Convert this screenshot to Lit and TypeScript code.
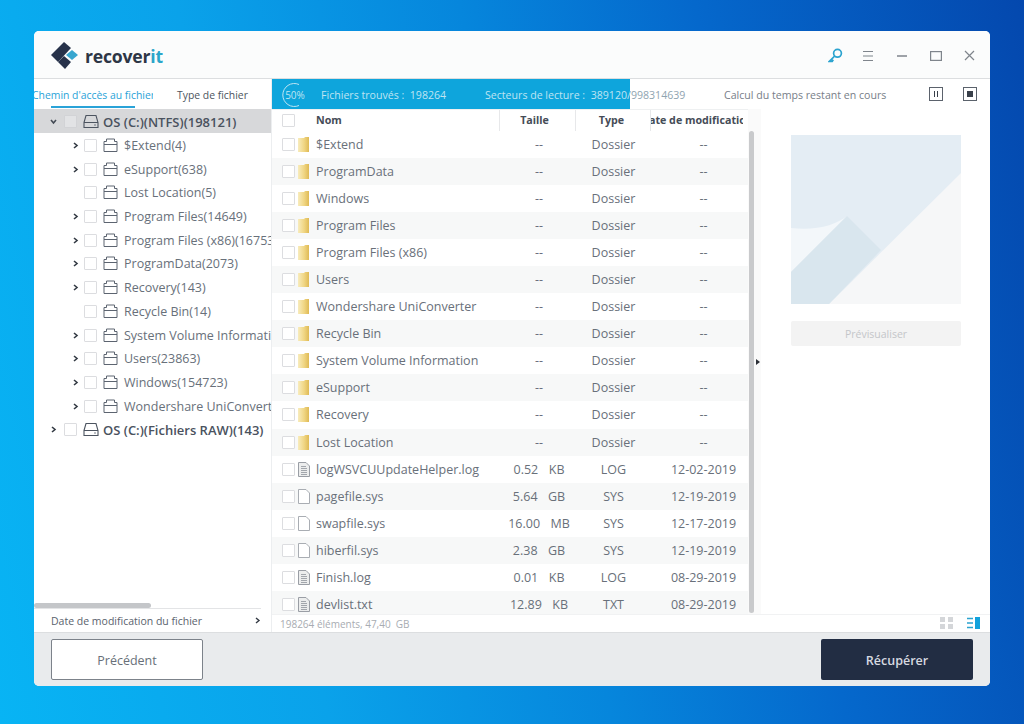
import { LitElement, html, css, svg } from "lit";
import { customElement } from "lit/decorators.js";

const tree = [
  ["$Extend(4)", 1], ["eSupport(638)", 1], ["Lost Location(5)", 0], ["Program Files(14649)", 1],
  ["Program Files (x86)(16753)", 1], ["ProgramData(2073)", 1], ["Recovery(143)", 1], ["Recycle Bin(14)", 0],
  ["System Volume Information(38)", 1], ["Users(23863)", 1], ["Windows(154723)", 1], ["Wondershare UniConverter(12)", 1],
] as [string, number][];

const rows = [
  ["d", "$Extend", "--", "Dossier", "--"], ["d", "ProgramData", "--", "Dossier", "--"], ["d", "Windows", "--", "Dossier", "--"],
  ["d", "Program Files", "--", "Dossier", "--"], ["d", "Program Files (x86)", "--", "Dossier", "--"], ["d", "Users", "--", "Dossier", "--"],
  ["d", "Wondershare UniConverter", "--", "Dossier", "--"], ["d", "Recycle Bin", "--", "Dossier", "--"],
  ["d", "System Volume Information", "--", "Dossier", "--"], ["d", "eSupport", "--", "Dossier", "--"],
  ["d", "Recovery", "--", "Dossier", "--"], ["d", "Lost Location", "--", "Dossier", "--"],
  ["t", "logWSVCUUpdateHelper.log", "0.52  KB", "LOG", "12-02-2019"], ["f", "pagefile.sys", "5.64  GB", "SYS", "12-19-2019"],
  ["f", "swapfile.sys", "16.00  MB", "SYS", "12-17-2019"], ["f", "hiberfil.sys", "2.38  GB", "SYS", "12-19-2019"],
  ["t", "Finish.log", "0.01  KB", "LOG", "08-29-2019"], ["t", "devlist.txt", "12.89  KB", "TXT", "08-29-2019"],
];

const folderIco = svg`<svg width="15" height="15" viewBox="0 0 15 15" fill="none" stroke="#5c6470" stroke-width="1"><path d="M1 13.5V3.5H3.5V1H11.5V3.5H14V13.5ZM1 6.5H14"/></svg>`;
const driveIco = svg`<svg width="16" height="15" viewBox="0 0 16 15" fill="none" stroke="#4c5460" stroke-width="1.1"><path d="M1 8.5L3 1.5H13L15 8.5V13.5H1ZM1 8.5H15"/><path d="M11.5 11H12.5" stroke-width="1.4"/></svg>`;
const yFolder = svg`<svg class="yf" width="11" height="15" viewBox="0 0 11 15"><defs><linearGradient id="yg" x1="0" x2="1" y1="0" y2="0"><stop offset="0" stop-color="#f8ecbd"/><stop offset=".55" stop-color="#f0d684"/><stop offset="1" stop-color="#dfba55"/></linearGradient></defs><path d="M0 1H6L7 0H11V15H0Z" fill="url(#yg)"/></svg>`;
const fileIco = svg`<svg width="12" height="15" viewBox="0 0 12 15" fill="#fff" stroke="#a9adb3"><path d="M.5 .5H8L11.5 4V14.5H.5Z"/></svg>`;
const textIco = svg`<svg width="12" height="15" viewBox="0 0 12 15" fill="#eceded" stroke="#9a9ea5"><path d="M.5 .5H8L11.5 4V14.5H.5Z"/><path d="M3 4.5H8M3 6.5H9M3 8.5H9M3 10.5H9M3 12.5H9" stroke-width=".9"/></svg>`;

@customElement("app-root")
export class AppRoot extends LitElement {
  static styles = css`
    :host { display: block; width: 1024px; height: 724px; overflow: hidden; box-sizing: border-box; padding: 31px 34px 0; font-family: "Open Sans", "Noto Sans", sans-serif; color: #5f6670;
      background: linear-gradient(78deg, #08b4f4 0%, #0aa2ea 28%, #0686dc 52%, #0568cc 72%, #0448ae 100%); }
    .win { width: 956px; height: 655px; background: #fff; border-radius: 5px; display: flex; flex-direction: column; overflow: hidden; }
    .title { height: 48px; flex: none; display: flex; align-items: center; background: #fbfcfc; border-bottom: 1px solid #dcdee0; padding: 2px 15px 0 17px; box-sizing: border-box; }
    .logo { display: flex; align-items: center; gap: 6px; font: 700 17.6px "Open Sans", sans-serif; color: #2d3646; letter-spacing: -.2px; }
    .logo b { color: #2ba5c9; font-weight: 700; }
    .tools { margin-left: auto; display: flex; align-items: center; gap: 22px; }
    .tools svg { display: block; }
    .tools .key { margin-right: -3px; }
    .body { flex: 1; display: flex; min-height: 0; }
    .side { width: 237px; flex: none; display: flex; flex-direction: column; border-right: 1px solid #eceef0; }
    .tabs { height: 30px; flex: none; display: flex; font-size: 10.4px; align-items: center; position: relative; color: #4d5560; overflow: hidden; padding-top: 2px; box-sizing: border-box; }
    .tabs .a { color: #2aa3d8; width: 119px; flex: none; white-space: nowrap; display: flex; justify-content: center; overflow: hidden; }
    .tabs .a span { flex: none; }
    .tabs .b { margin-left: 24px; white-space: nowrap; }
    .tabs i { position: absolute; left: 17px; bottom: 1px; width: 84px; height: 2px; background: #2aa3d8; }
    .tree { flex: 1; min-height: 0; overflow: hidden; }
    .node { height: 23.7px; display: flex; align-items: center; font-size: 12.5px; white-space: nowrap; overflow: hidden; color: #68707a; padding-top: 2px; box-sizing: border-box; }
    .node.on { background: #d7d8da; }
    .node.on .cb { background: #e2e3e5; border-color: #d2d3d6; }
    .node.root { font-size: 13px; font-weight: 600; color: #4a525e; padding-left: 16px; }
    .node.child { padding-left: 38px; }
    .arrow { width: 7px; flex: none; margin-right: 7px; display: block; }
    .node.child .arrow { margin-right: 5px; }
    .cb { width: 11px; height: 11px; flex: none; border: 1px solid #dcdde0; background: #fff; border-radius: 1px; box-sizing: content-box; }
    .node .cb { margin-right: 6px; }
    .node.root svg:not(.arrow) { margin-right: 4px; flex: none; }
    .node.child svg:not(.arrow) { margin-right: 6px; flex: none; }
    .sbar { height: 6px; flex: none; position: relative; border-bottom: 1px solid #e3e4e6; margin-right: 10px; box-sizing: content-box; }
    .sbar i { position: absolute; left: 0; top: 1px; width: 117px; height: 5px; background: #c4c6c9; border-radius: 3px; }
    .date { height: 23px; flex: none; display: flex; align-items: center; justify-content: space-between; font-size: 10.5px; padding: 0 10px 0 17px; color: #5a626d; box-sizing: border-box; }
    .main { flex: 1; min-width: 0; display: flex; flex-direction: column; }
    .prog { height: 30px; flex: none; display: flex; align-items: center; font-size: 10.6px; position: relative; background: #fff; color: #7b828c; white-space: pre; }
    .fill { position: absolute; left: 0; top: 0; bottom: 0; width: 358px; background: #0ea5dc; overflow: hidden; }
    .ptext { display: flex; align-items: center; width: 719px; height: 100%; flex: none; color: #8fa4b0; white-space: pre; padding-top: 2px; box-sizing: border-box; }
    .fill .ptext { color: #bfe4f2; }
    .ring { margin: 0 0 0 10px; width: 26px; height: 26px; position: relative; display: flex; align-items: center; justify-content: center; font-size: 10px; flex: none; }
    .ring svg { position: absolute; inset: 0; }
    .found { margin-left: 13px; width: 164px; flex: none; }
    .calc { position: absolute; left: 452px; top: 2px; bottom: 0; display: flex; align-items: center; color: #777e88; }
    .pbtn { position: absolute; top: 8px; width: 12px; height: 12px; border: 1px solid #5b626c; display: flex; align-items: center; justify-content: center; gap: 1.5px; }
    .pbtn.p1 { left: 657px; }
    .pbtn.p2 { left: 691px; }
    .pbtn u { display: block; width: 1.5px; height: 6px; background: #39404a; }
    .pbtn s { display: block; width: 6px; height: 6px; background: #39404a; }
    .content { flex: 1; min-height: 0; display: flex; }
    .tbl { width: 476px; flex: none; display: flex; flex-direction: column; overflow: hidden; }
    .head, .row { display: grid; grid-template-columns: 228px 76px 75px 97px; align-items: center; }
    .head { height: 22px; flex: none; font-size: 10.7px; font-weight: 700; color: #454c57; border-top: 1px solid #eef0f1; box-sizing: border-box; }
    .hc { height: 100%; display: flex; align-items: center; justify-content: center; border-right: 1px solid #e7e8ea; white-space: nowrap; overflow: hidden; box-sizing: border-box; padding-bottom: 1px; }
    .hc:first-child { justify-content: flex-start; padding-left: 10px; gap: 21px; }
    .hc.t1 { padding-right: 6px; }
    .hc.t2 { padding-right: 3px; }
    .hc:last-child { border: 0; margin-right: 5px; padding: 0 0 1px; }
    .hc span { flex: none; }
    .list { flex: 1; min-height: 0; overflow: hidden; }
    .row { height: 27.06px; font-size: 12.5px; color: #69707a; text-align: center; white-space: pre; }
    .row:nth-child(even) { background: #f7f8f8; }
    .nm { display: flex; align-items: center; text-align: left; padding-left: 10px; }
    .nm .cb { margin-right: 3px; }
    .nm svg { margin-right: 6px; flex: none; }
    .nm svg.yf { margin-right: 7px; }
    .sz { word-spacing: 2px; padding-left: 2px; }
    .dt { padding-left: 8px; }
    .vs { width: 13px; flex: none; background: #fafafa; display: flex; justify-content: flex-start; padding-left: 1px; box-sizing: border-box; }
    .vs i { display: block; width: 5px; height: 482px; margin-top: 22px; background: #c9cacc; border-radius: 3px; }
    .pre { flex: 1; position: relative; padding: 26px 0 0 30px; }
    .thumb { display: block; }
    .pv { margin-top: 17px; width: 170px; height: 25px; background: #f3f3f3; border-radius: 2px; display: flex; align-items: center; justify-content: center; color: #c4c6c9; font-size: 10.5px; }
    .tri { position: absolute; left: -5px; top: 250px; width: 0; height: 0; border-left: 4px solid #2b2f36; border-top: 3.5px solid transparent; border-bottom: 3.5px solid transparent; }
    .stat { height: 17px; flex: none; display: flex; align-items: center; font-size: 10px; color: #a8acb2; padding: 0 10px 0 8px; border-top: 1px solid #f1f2f3; white-space: pre; }
    .stat .v { margin-left: auto; display: flex; gap: 14px; align-items: center; }
    .foot { height: 54px; flex: none; background: #e9ebed; border-top: 1px solid #dcdee0; box-sizing: border-box; display: flex; align-items: center; justify-content: space-between; padding: 0 17px; }
    .btn { width: 152px; height: 41px; border-radius: 2px; display: flex; align-items: center; justify-content: center; font-size: 12.5px; box-sizing: border-box; padding-top: 2px; }
    .prev { background: #fff; border: 1px solid #7c828a; color: #686f79; }
    .rec { background: #222d43; color: #d7dae0; font-weight: 600; }
  `;

  arrow(open = false) {
    return open
      ? svg`<svg class="arrow" width="7" height="7" viewBox="0 0 7 7"><path d="M1 2L3.5 5L6 2" fill="none" stroke="#444b55" stroke-width="1.6"/></svg>`
      : svg`<svg class="arrow" width="7" height="7" viewBox="0 0 7 7"><path d="M2 1L5 3.5L2 6" fill="none" stroke="#333a44" stroke-width="1.6"/></svg>`;
  }

  render() {
    return html`<div class="win">
      <div class="title">
        <div class="logo">
          <svg width="28" height="27" viewBox="0 0 28 27">
            <path d="M0 13L13 0L20 6L7 20Z" fill="#27324a"/>
            <path d="M7 20L13 14L20 20L14 27Z" fill="#27324a"/>
            <path d="M15 13L21 8L27 13L21 18Z" fill="#37a6cf"/>
          </svg>
          <span>recover<b>it</b></span>
        </div>
        <div class="tools">
          <svg class="key" width="15" height="15" viewBox="0 0 15 15" fill="none" stroke="#2ba3cf" stroke-width="1.7"><circle cx="9.5" cy="5.3" r="3.9"/><path d="M6.7 8L1.5 13.3H4.2L5.3 11.8"/></svg>
          <svg width="12" height="12" viewBox="0 0 12 12" stroke="#7f858c" stroke-width="1.1"><path d="M1 1.5H11M1 6H11M1 10.5H11"/></svg>
          <svg width="12" height="12" viewBox="0 0 12 12" stroke="#7f858c" stroke-width="1.3"><path d="M1 6H11"/></svg>
          <svg width="12" height="12" viewBox="0 0 12 12" fill="none" stroke="#7f858c" stroke-width="1.2"><rect x=".6" y="1.6" width="10.8" height="8.8"/></svg>
          <svg width="11" height="11" viewBox="0 0 11 11" stroke="#7f858c" stroke-width="1.2"><path d="M1 1L10 10M10 1L1 10"/></svg>
        </div>
      </div>
      <div class="body">
        <div class="side">
          <div class="tabs"><span class="a"><span>Chemin d'accès au fichier</span></span><span class="b">Type de fichier</span><i></i></div>
          <div class="tree">
            <div class="node root on">${this.arrow(true)}<span class="cb"></span>${driveIco}OS (C:)(NTFS)(198121)</div>
            ${tree.map(([n, a]) => html`<div class="node child">${a ? this.arrow() : html`<span class="arrow"></span>`}<span class="cb"></span>${folderIco}${n}</div>`)}
            <div class="node root">${this.arrow()}<span class="cb"></span>${driveIco}OS (C:)(Fichiers RAW)(143)</div>
          </div>
          <div class="sbar"><i></i></div>
          <div class="date">Date de modification du fichier ${svg`<svg width="7" height="7" viewBox="0 0 7 7"><path d="M2 1L5 3.5L2 6" fill="none" stroke="#333a44" stroke-width="1.4"/></svg>`}</div>
        </div>
        <div class="main">
          <div class="prog">
            <div class="ptext">${this.progText()}</div>
            <div class="fill"><div class="ptext">${this.progText()}</div></div>
            <span class="calc">Calcul du temps restant en cours</span>
            <span class="pbtn p1"><u></u><u></u></span>
            <span class="pbtn p2"><s></s></span>
          </div>
          <div class="content">
            <div class="tbl">
              <div class="head">
                <div class="hc"><span class="cb"></span><span>Nom</span></div>
                <div class="hc t1">Taille</div><div class="hc t2">Type</div>
                <div class="hc"><span>Date de modification</span></div>
              </div>
              <div class="list">
                ${rows.map(([k, n, s, t, d]) => html`<div class="row"><div class="nm"><span class="cb"></span>${k === "d" ? yFolder : k === "f" ? fileIco : textIco}${n}</div><div class="sz">${s}</div><div>${t}</div><div class="dt">${d}</div></div>`)}
              </div>
            </div>
            <div class="vs"><i></i></div>
            <div class="pre">
              <span class="tri"></span>
              <svg class="thumb" width="170" height="169" viewBox="0 0 170 169">
                <rect width="170" height="169" fill="#e4edf4"/>
                <path d="M170 38V169H38Z" fill="#f6f7f8"/>
                <path d="M0 93C25 96 45 90 56 81L0 137Z" fill="#f3f7fa"/>
                <path d="M0 137L56 81L90 115L38 169H0Z" fill="#d9e6ee"/>
              </svg>
              <div class="pv">Prévisualiser</div>
            </div>
          </div>
          <div class="stat"><span>198264 éléments, 47,40  GB</span><span class="v"><svg width="13" height="13" viewBox="0 0 13 13" fill="#d4d6d9"><rect width="5" height="5"/><rect x="8" width="5" height="5"/><rect y="7" width="5" height="5"/><rect x="8" y="7" width="5" height="5"/></svg><svg width="13" height="13" viewBox="0 0 13 13"><path d="M0 1.5H6M0 6H6M0 10.5H6" stroke="#2ba3cf" stroke-width="1.4"/><rect x="8" y="0" width="5" height="12" fill="#12a2dc"/></svg></span></div>
        </div>
      </div>
      <div class="foot"><div class="btn prev">Précédent</div><div class="btn rec">Récupérer</div></div>
    </div>`;
  }

  progText() {
    return html`<span class="ring"><svg viewBox="0 0 26 26" fill="none" stroke="currentColor" stroke-width="1"><path d="M17 2.5A11.5 11.5 0 1 0 17 23.5"/></svg>50%</span><span class="found">Fichiers trouvés :  198264</span><span>Secteurs de lecture :  389120/998314639</span>`;
  }
}
